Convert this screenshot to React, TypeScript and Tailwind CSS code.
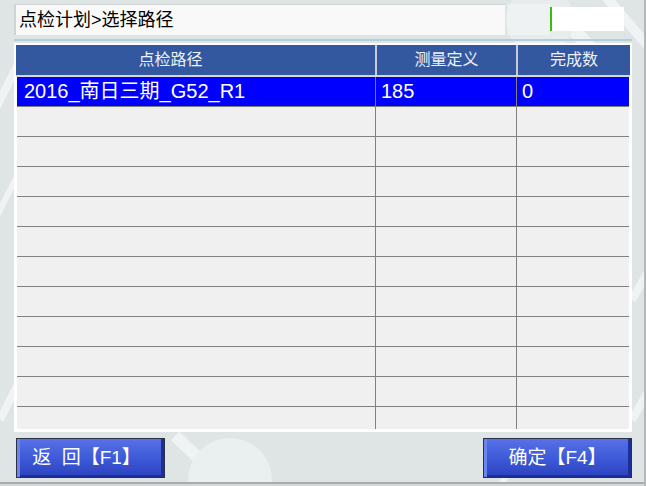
import React from 'react';

const cjk = { fontFamily: '"Liberation Sans", "Noto Sans CJK SC", sans-serif' };

const rows = [
  { path: '2016_南日三期_G52_R1', defs: '185', done: '0' },
];

function Backdrop() {
  // decorative stripes and circles behind the panels
  return (
    <svg className="absolute inset-0" width="646" height="486" viewBox="0 0 646 486">
      <g stroke="#f4f7f7" strokeOpacity="0.75" fill="none">
        <path d="M-10 120 L20 60" strokeWidth="8" />
        <path d="M-10 230 L20 170" strokeWidth="6" />
        <path d="M0 420 L20 380" strokeWidth="8" />
        <path d="M175 436 L235 492" strokeWidth="12" />
        <path d="M540 -10 L600 60" strokeWidth="14" />
        <path d="M600 -10 L660 60" strokeWidth="10" />
        <path d="M632 300 L660 250" strokeWidth="8" />
        <path d="M632 420 L660 370" strokeWidth="8" />
        <path d="M500 486 L530 440" strokeWidth="6" />
      </g>
      <circle cx="230" cy="480" r="42" fill="#eaefef" />
      <circle cx="540" cy="20" r="34" fill="#e7ecec" />
    </svg>
  );
}

function Row({ path, defs, done, selected }: { path?: string; defs?: string; done?: string; selected?: boolean }) {
  const bg = selected ? 'bg-[#0000ff] text-white' : 'bg-[#f0f0f0] text-black';
  return (
    <div className={`flex h-[30px] shrink-0 border-b border-[#808080] ${bg}`}>
      <div className="w-[359px] pl-[7px] text-[20px] leading-[29px] border-r border-[#808080]">{path}</div>
      <div className="w-[141px] pl-[5px] text-[20px] leading-[29px] border-r border-[#808080]">{defs}</div>
      <div className="flex-1 pl-[5px] text-[20px] leading-[29px]">{done}</div>
    </div>
  );
}

function FnButton({ label, className }: { label: string; className?: string }) {
  return (
    <button
      className={`w-[149px] h-[40px] border-[1.5px] border-[#2c3040] bg-gradient-to-b from-[#5672e6] via-[#3e5ad8] to-[#2c42be] text-white text-[19px] leading-[36px] shadow-[inset_3px_0_0_#6a86ee,inset_-3px_0_0_#1e2e98,inset_0_-2px_0_#1e2e98] ${className ?? ''}`}
      style={cjk}
    >
      {label}
    </button>
  );
}

export default function App() {
  const filler = Array.from({ length: 11 });
  return (
    <div className="relative w-[646px] h-[486px] overflow-hidden bg-[#dfe5e5]" style={cjk}>
      <Backdrop />
      <div className="relative flex flex-col h-full">
        <div className="flex items-start mt-[4px] ml-[14px] h-[31px]">
          <div className="w-[491px] h-[31px] bg-[#f9f9f9] border-l-2 border-t border-[#cfd3d3] pl-[3px] text-[18px] leading-[30px] text-black">
            点检计划&gt;选择路径
          </div>
          <div className="w-[43px] h-[31px] ml-[2px] bg-white/30" />
          <div className="mt-[3px] w-[74px] h-[24px] bg-white border-l-2 border-[#3cbc10]" />
        </div>

        <div className="mt-[4px] ml-[14px] w-[618px] h-[2px] bg-[#b5cede]" />

        <div className="mt-[2px] ml-[14px] w-[618px] h-[389px] bg-white p-[2px] flex flex-col">
          <div className="flex h-[30px] bg-[#3458a0] text-[#eef2fa] text-[16px] leading-[30px] shrink-0">
            <div className="w-[361px] pr-[50px] text-center border-r-2 border-[#c8ccd8]">点检路径</div>
            <div className="w-[141px] text-center border-r-2 border-[#c8ccd8]">测量定义</div>
            <div className="flex-1 text-center">完成数</div>
          </div>
          <div className="h-[2px] bg-[#d8d8d8] shrink-0" />
          <div className="mx-[1px] flex-1 overflow-hidden flex flex-col bg-[#f0f0f0]">
            {rows.map((r) => (
              <Row key={r.path} path={r.path} defs={r.defs} done={r.done} selected />
            ))}
            {filler.map((_, i) => (
              <Row key={i} />
            ))}
          </div>
          <div className="h-[1px] shrink-0" />
        </div>

        <div className="flex justify-between mt-[6px] ml-[16px] w-[616px]">
          <FnButton label="返  回【F1】" className="whitespace-pre pr-[8px]" />
          <FnButton label="确定【F4】" />
        </div>

        <div className="mt-auto h-[4px] border-t-2 border-[#a8acac] bg-[#d4d8d8]" />
      </div>
      <div className="absolute right-0 top-0 w-[2px] h-full bg-[#b4b8b8]" />
    </div>
  );
}
